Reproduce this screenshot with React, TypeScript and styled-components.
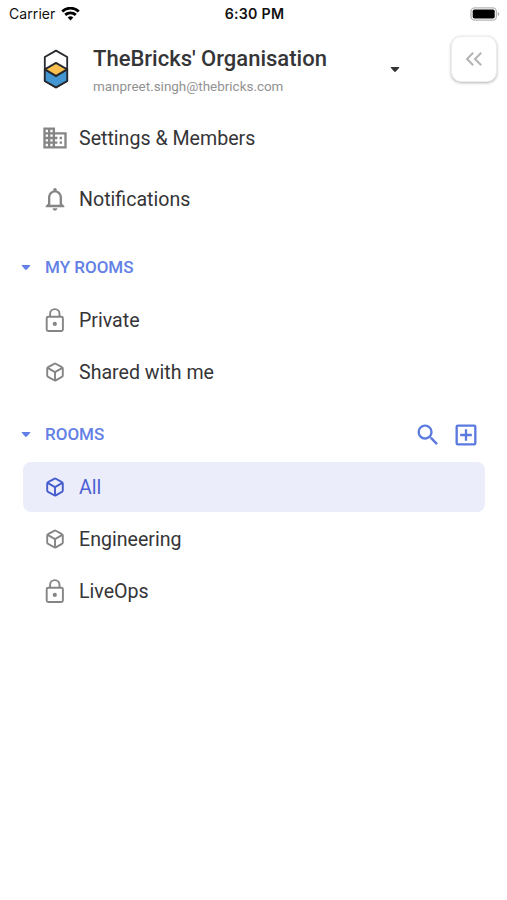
import React from "react";
import styled, { createGlobalStyle } from "styled-components";

const GlobalStyle = createGlobalStyle`
  * { box-sizing: border-box; }
  body { margin: 0; background: #fff; font-family: Roboto, sans-serif; color: #353538; }
  svg { display: block; flex: none; }
`;

const Screen = styled.main`
  width: 507px;
  height: 900px;
  overflow: hidden;
  background: #fff;
`;

const StatusBar = styled.div`
  display: grid;
  grid-template-columns: 1fr auto 1fr;
  align-items: center;
  height: 28px;
  padding: 0 7px 1px 9px;
  font-family: Inter, sans-serif;
  color: #111;
`;

const Carrier = styled.div`
  display: flex;
  align-items: center;
  gap: 6px;
  font-size: 14px;
  letter-spacing: 0.08px;
`;

const Clock = styled.div`
  font-size: 14.2px;
  font-weight: 600;
  letter-spacing: 0.25px;
`;

const BatterySlot = styled.div`
  display: flex;
  justify-content: flex-end;
`;

const Header = styled.header`
  display: flex;
  align-items: flex-start;
  height: 85px;
  padding: 8px 10px 0 42px;
`;

const LogoSlot = styled.div`
  width: 51px;
  padding-top: 12px;
`;

const Organisation = styled.div`
  width: 297px;
  padding-top: 9px;
`;

const OrgName = styled.h1`
  margin: 0;
  font-size: 22px;
  line-height: 28px;
  font-weight: 500;
  white-space: nowrap;
`;

const Email = styled.div`
  margin-top: 5px;
  font-size: 13.45px;
  line-height: 18px;
  color: #929292;
`;

const CaretSlot = styled.div`
  padding-top: 30px;
`;

const CollapseButton = styled.button`
  display: grid;
  place-items: center;
  width: 46px;
  height: 46px;
  margin-left: auto;
  padding: 0;
  border: 1px solid #ededed;
  border-radius: 10px;
  background: #fff;
  box-shadow: 0 1px 3px rgba(0, 0, 0, 0.3);
`;

const List = styled.nav<{ $gap: number }>`
  display: flex;
  flex-direction: column;
  gap: ${(p) => p.$gap}px;
  padding: 0 22px 0 23px;
`;

const Item = styled.a<{ $active?: boolean }>`
  display: flex;
  align-items: center;
  height: 50px;
  padding-left: 18px;
  border-radius: 8px;
  background: ${(p) => (p.$active ? "#ebedfb" : "transparent")};
  color: ${(p) => (p.$active ? "#4c62d2" : "#353538")};
  font-size: 19.6px;
  line-height: 24px;
`;

const ItemLabel = styled.span`
  padding-top: 2px;
`;

const IconSlot = styled.span<{ $active?: boolean }>`
  display: grid;
  place-items: center;
  width: 28px;
  height: 28px;
  margin-right: 10px;
  color: ${(p) => (p.$active ? "#465dce" : "#858585")};
`;

const Section = styled.section<{ $top: number }>`
  margin-top: ${(p) => p.$top}px;
`;

const SectionHeader = styled.div`
  display: flex;
  align-items: center;
  height: 50px;
  margin-bottom: 3px;
  padding: 0 27px 0 21px;
  color: #6280e5;
`;

const SectionTitle = styled.h2`
  flex: 1;
  margin: 0 0 0 14px;
  font-size: 17px;
  line-height: 22px;
  font-weight: 500;
`;

const Actions = styled.div`
  display: flex;
  gap: 10px;
  padding-top: 2px;
  color: #5b7ae0;
`;

const Caret = () => (
  <svg width="10" height="7" viewBox="0 0 10 7">
    <path d="M1.4 1h7.2c.7 0 .8.6.4 1L5.9 5.6c-.5.5-1.3.5-1.8 0L1 2c-.4-.4-.3-1 .4-1Z" fill="currentColor" />
  </svg>
);

const Glyph = ({ d, size = 28 }: { d: string; size?: number }) => (
  <svg width={size} height={size} viewBox="0 0 24 24" fill="currentColor">
    <path d={d} />
  </svg>
);

const Building = () => (
  <Glyph d="M12 7V3H2v18h20V7H12zM6 19H4v-2h2v2zm0-4H4v-2h2v2zm0-4H4V9h2v2zm0-4H4V5h2v2zm4 12H8v-2h2v2zm0-4H8v-2h2v2zm0-4H8V9h2v2zm0-4H8V5h2v2zm10 12h-8v-2h2v-2h-2v-2h2v-2h-2V9h8v10zm-2-8h-2v2h2v-2zm0 4h-2v2h2v-2z" />
);

const Bell = () => (
  <Glyph
    d="M12 22c1.1 0 2-.9 2-2h-4c0 1.1.9 2 2 2zm6-6v-5c0-3.07-1.63-5.64-4.5-6.32V4c0-.83-.67-1.5-1.5-1.5s-1.5.67-1.5 1.5v.68C7.64 5.36 6 7.92 6 11v5l-2 2v1h16v-1l-2-2zm-2 1H8v-6c0-2.48 1.51-4.5 4-4.5s4 2.02 4 4.5v6z"
  />
);

const Lock = () => (
  <svg width="28" height="28" viewBox="0 0 28 28" fill="none" stroke="currentColor" strokeWidth="1.9">
    <rect x="5.7" y="10.8" width="16.2" height="14.2" rx="1.5" />
    <path d="M9.1 10.6V7.8a4.7 4.7 0 0 1 9.4 0v2.8" />
    <circle cx="13.8" cy="17.9" r="2.1" fill="currentColor" stroke="none" />
  </svg>
);

const Cube = () => (
  <svg width="28" height="28" viewBox="0 0 28 28" fill="none" stroke="currentColor" strokeWidth="1.9" strokeLinejoin="round">
    <path d="M13.2 5.8a1.6 1.6 0 0 1 1.6 0l6.1 3.4c.6.3.9.8.9 1.4v6.9c0 .6-.3 1.1-.9 1.4l-6.1 3.4a1.6 1.6 0 0 1-1.6 0l-6.1-3.4c-.6-.3-.9-.8-.9-1.4v-6.9c0-.6.3-1.1.9-1.4Z" />
    <path d="m6.6 9.9 7.4 4.2 7.4-4.2M14 14.1v8.2" />
  </svg>
);

const Search = () => (
  <Glyph d="M15.5 14h-.79l-.28-.27A6.47 6.47 0 0 0 16 9.5 6.5 6.5 0 1 0 9.5 16c1.61 0 3.09-.59 4.23-1.57l.27.28v.79l5 4.99L20.49 19l-4.99-5zm-6 0C7.01 14 5 11.99 5 9.5S7.01 5 9.5 5 14 7.01 14 9.5 11.99 14 9.5 14z" />
);

const AddBox = () => (
  <Glyph d="M19 3H5a2 2 0 0 0-2 2v14a2 2 0 0 0 2 2h14a2 2 0 0 0 2-2V5a2 2 0 0 0-2-2zm0 16H5V5h14v14zm-8-2h2v-4h4v-2h-4V7h-2v4H7v2h4v4z" />
);

const Wifi = () => (
  <svg width="19" height="14" viewBox="0 0 19 14" fill="none" stroke="#000" strokeWidth="2.8">
    <path d="M1.2 4.5a12 12 0 0 1 16.6 0M4.2 7.9a7.8 7.8 0 0 1 10.6 0" />
    <path d="M6.7 10.4a4.2 4.2 0 0 1 5.6 0L9.5 13.4Z" fill="#000" stroke="none" />
  </svg>
);

const Battery = () => (
  <svg width="30" height="14" viewBox="0 0 30 14">
    <rect x="1" y=".8" width="25.4" height="12.4" rx="3.8" fill="#fff" stroke="#b5b5b5" strokeWidth="1.3" />
    <rect x="2.7" y="2.5" width="22" height="9" rx="1.8" fill="#000" />
    <path d="M27.8 5c2 .8 2 3.2 0 4Z" fill="#aaa" />
  </svg>
);

const Logo = () => (
  <svg width="28" height="42" viewBox="0 0 28 42" strokeLinejoin="round" stroke="#25292d" strokeWidth="1.8">
    <path d="M14 2.6 25.2 9v24L14 39.4 2.8 33V9Z" fill="#fff" />
    <path d="M2.8 21.3 14 28.1l11.2-6.8V33L14 39.4 2.8 33Z" fill="#4396d2" />
    <path d="m14 14.9 11.2 6.5L14 27.9 2.8 21.4Z" fill="#fbc14f" />
  </svg>
);

const DoubleChevron = () => (
  <svg width="20" height="16" viewBox="0 0 20 16" fill="none" stroke="#b4b4b4" strokeWidth="2">
    <path d="M9.2 1.8 3 8l6.2 6.2M17.2 1.8 11 8l6.2 6.2" />
  </svg>
);

interface NavItemProps {
  icon: React.ReactNode;
  label: string;
  active?: boolean;
}

const NavItem = ({ icon, label, active }: NavItemProps) => (
  <Item $active={active}>
    <IconSlot $active={active}>{icon}</IconSlot>
    <ItemLabel>{label}</ItemLabel>
  </Item>
);

export default function App() {
  return (
    <>
      <GlobalStyle />
      <Screen>
        <StatusBar>
          <Carrier>
            Carrier
            <Wifi />
          </Carrier>
          <Clock>6:30 PM</Clock>
          <BatterySlot>
            <Battery />
          </BatterySlot>
        </StatusBar>
        <Header>
          <LogoSlot>
            <Logo />
          </LogoSlot>
          <Organisation>
            <OrgName>TheBricks' Organisation</OrgName>
            <Email>manpreet.singh@thebricks.com</Email>
          </Organisation>
          <CaretSlot>
            <Caret />
          </CaretSlot>
          <CollapseButton aria-label="Collapse">
            <DoubleChevron />
          </CollapseButton>
        </Header>
        <List $gap={11}>
          <NavItem icon={<Building />} label="Settings & Members" />
          <NavItem icon={<Bell />} label="Notifications" />
        </List>
        <Section $top={18}>
          <SectionHeader>
            <Caret />
            <SectionTitle>MY ROOMS</SectionTitle>
          </SectionHeader>
          <List $gap={2}>
            <NavItem icon={<Lock />} label="Private" />
            <NavItem icon={<Cube />} label="Shared with me" />
          </List>
        </Section>
        <Section $top={12}>
          <SectionHeader>
            <Caret />
            <SectionTitle>ROOMS</SectionTitle>
            <Actions>
              <Search />
              <AddBox />
            </Actions>
          </SectionHeader>
          <List $gap={2}>
            <NavItem icon={<Cube />} label="All" active />
            <NavItem icon={<Cube />} label="Engineering" />
            <NavItem icon={<Lock />} label="LiveOps" />
          </List>
        </Section>
      </Screen>
    </>
  );
}
